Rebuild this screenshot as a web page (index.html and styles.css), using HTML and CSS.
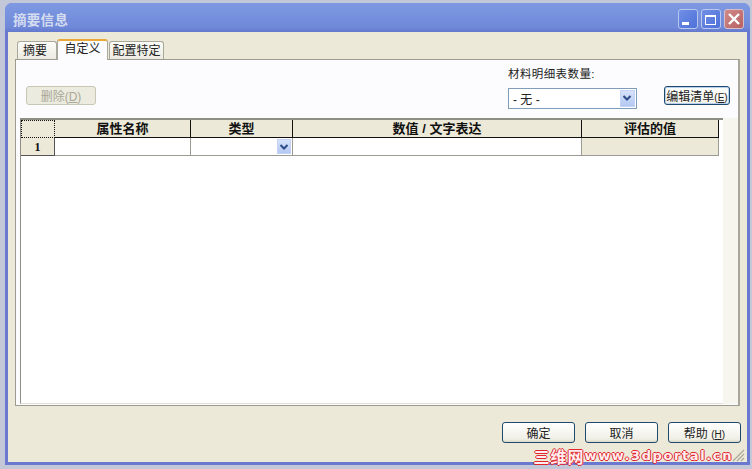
FILE: index.html
```html
<!DOCTYPE html>
<html lang="zh">
<head>
<meta charset="utf-8">
<title>摘要信息</title>
<link rel="stylesheet" href="styles.css">
</head>
<body>
<div class="window">
  <div class="titlebar">
    <span class="title">摘要信息</span>
    <div class="winbtns">
      <span class="winbtn"><svg width="18" height="18" viewBox="0 0 18 18"><rect x="3" y="12" width="7" height="3" fill="#fff"/></svg></span>
      <span class="winbtn"><svg width="18" height="18" viewBox="0 0 18 18"><rect x="3.5" y="5.5" width="10" height="9" fill="none" stroke="#fff"/><rect x="3" y="5" width="11" height="2" fill="#fff"/></svg></span>
      <span class="winbtn close"><svg width="18" height="18" viewBox="0 0 18 18"><path d="M4 4l10 10M14 4L4 14" stroke="#fff" stroke-width="2.4" fill="none"/></svg></span>
    </div>
  </div>
  <div class="client">
    <div class="tabs">
      <span class="tab first">摘要</span>
      <span class="tab active">自定义</span>
      <span class="tab third">配置特定</span>
    </div>
    <div class="panel">
      <div class="tools">
        <button class="btn-del">删除(<u>D</u>)</button>
        <div class="bom">
          <div class="bom-label">材料明细表数量:</div>
          <div class="combo"><span class="combo-val">- 无 -</span>
            <span class="arrow"><svg width="15" height="17" viewBox="0 0 15 17"><path d="M3.5 6l3.5 3.5L10.500 6" fill="none" stroke="#2b4a86" stroke-width="2"/></svg></span>
          </div>
        </div>
        <button class="btn-edit">编辑清单<span class="mn">(<u>E</u>)</span></button>
      </div>
      <div class="sheet-row">
        <div class="sheet">
          <div class="grid">
            <div class="head corner"></div>
            <div class="head">属性名称</div>
            <div class="head">类型</div>
            <div class="head">数值 / 文字表达</div>
            <div class="head last">评估的值</div>
            <div class="rownum">1</div>
            <div class="cell"></div>
            <div class="cell typecell"><span class="arrow small"><svg width="13" height="14" viewBox="0 0 13 14"><path d="M2.500 5l3.500 3.500L9.500 5" fill="none" stroke="#2b4a86" stroke-width="2"/></svg></span></div>
            <div class="cell"></div>
            <div class="cell calc"></div>
          </div>
        </div>
        <div class="sheet-rest"></div>
      </div>
    </div>
    <div class="footer">
      <button class="btn">确定</button>
      <button class="btn">取消</button>
      <button class="btn">帮助 <span class="mn">(<u>H</u>)</span></button>
    </div>
  </div>
  <svg class="grip" width="13" height="13" viewBox="0 0 13 13"><path d="M12 1L1 12M12 5L5 12M12 9L9 12" stroke="#a9a797" stroke-width="1.200" fill="none"/></svg>
  <div class="watermark"><span class="wm-cjk">三维网</span>www.3dportal.cn</div>
</div>
</body>
</html>
```
FILE: styles.css
```css
* { box-sizing: border-box; }
html, body { margin: 0; padding: 0; }
body {
  width: 752px; height: 469px; overflow: hidden;
  background: #c3c8d8;
  font-family: "Liberation Sans", "Noto Sans CJK SC", sans-serif;
  font-size: 12px; color: #222;
  padding: 3px 2px 4px 5px;
}
.window {
  position: relative;
  height: 462px;
  display: flex; flex-direction: column;
  background: #6a78d0;
  border-radius: 7px 7px 0 0;
  padding: 0 3px 3px 3px;
}
.titlebar {
  height: 29px; flex: none;
  margin: 0 -3px;
  padding: 2px 6px 0 8px;
  display: flex; align-items: center; justify-content: space-between;
  background: linear-gradient(#7f9ae2 0%, #7792de 40%, #6f88d8 85%, #6478cc 100%);
  border-radius: 7px 7px 0 0;
}
.title { color: #d4dcf0; font-weight: bold; font-size: 13.5px; letter-spacing: 0.3px; }
.winbtns { display: flex; gap: 3px; }
.winbtn {
  width: 20px; height: 20px; border-radius: 3px;
  background: linear-gradient(135deg, #6f8fe6, #4f70d8);
  border: 1px solid #b9c8ee;
  display: flex; align-items: center; justify-content: center;
  overflow: hidden;
}
.winbtn svg { flex: none; }
.close { background: linear-gradient(135deg, #d08a8a, #b86060); border-color: #d8c0c8; }
.client {
  flex: 1; min-height: 0;
  background: #ece9d8;
  padding: 10px 7px 0 7px;
  display: flex; flex-direction: column;
}
.tabs { display: flex; height: 18px; padding-left: 2px; align-items: flex-end; flex: none; position: relative; z-index: 1; margin-bottom: -1px; }
.tab {
  height: 18px; margin-bottom: 1px; line-height: 18px;
  border: 1px solid #a9a89c; border-bottom: none;
  border-radius: 3px 3px 0 0;
  background: linear-gradient(#fcfcf8, #ecebe2);
  font-size: 12px; color: #222; text-align: center;
}
.first { width: 40px; padding-right: 4px; }
.third { width: 55px; margin-left: 1px; }
.tab.active {
  height: 21px; width: 51px; margin-bottom: 0; padding: 0; line-height: 16px;
  background: #fcfcfe;
  border-top: 2px solid #e8a83c;
  border-bottom: none;
}
.panel {
  height: 347px; flex: none;
  background: #fcfcfe;
  border: 1px solid #9c9b91;
  border-right: 2px solid #a8a69a;
  padding: 0 0 1px 4px;
  display: flex; flex-direction: column;
}
.tools { height: 58px; flex: none; display: flex; align-items: flex-start; }
.btn-del {
  margin: 26px 0 0 6px; width: 70px; height: 19px; padding: 0;
  border: 1px solid #c8c6b4; border-radius: 3px;
  background: #ecebdf; color: #a9a797;
  font: 12px "Liberation Sans", "Noto Sans CJK SC", sans-serif;
}
.bom { margin-left: 412px; margin-top: 6px; width: 135px; }
.bom-label { height: 22px; line-height: 16px; font-size: 11.5px; letter-spacing: 0.4px; }
.combo {
  width: 129px; height: 21px;
  border: 1px solid #7f9db9;
  background: #fff; display: flex; align-items: center; justify-content: space-between;
  padding: 1px;
}
.combo-val { padding-left: 3px; font-size: 12px; }
.arrow {
  width: 15px; height: 17px; display: flex; align-items: center; justify-content: center;
  background: linear-gradient(#d6e2fb, #b4c8f2);
  border: 1px solid #c4d3f5;
  overflow: hidden;
}
.arrow svg { flex: none; }
.btn-edit {
  margin: 26px 0 0 21px; width: 66px; height: 19px; padding: 0;
  border: 1px solid #1f4a6e; border-radius: 3px;
  background: linear-gradient(#fff, #f2f1e8);
  box-shadow: inset 0 0 0 1px #b8d0ee;
  color: #222; white-space: nowrap;
  font: 12px "Liberation Sans", "Noto Sans CJK SC", sans-serif;
}
.mn { font-size: 10px; }
.sheet-row { flex: 1; min-height: 0; display: flex; }
.sheet {
  flex: none; width: 703px;
  background: #fff;
  border-top: 2px solid #8f8e85;
  border-left: 1px solid #8f8e85;
  border-bottom: 1px solid #e4e2d6;
}
.sheet-rest { flex: 1; background: #f6f5ee; }
.grid {
  display: grid;
  grid-template-columns: 34px 136px 102px 289px 137px;
  grid-template-rows: 18px 18px;
}
.head {
  background: #ece9d8;
  border-right: 1px solid #111;
  border-bottom: 1px solid #111;
  text-align: center; font-weight: bold; font-size: 13px; line-height: 17px;
  color: #111;
}
.head.corner { border: 1px dotted #111; }
.rownum {
  background: #ece9d8;
  border-right: 1px solid #555;
  border-bottom: 1px solid #555;
  text-align: center; font: bold 12px/18px "Liberation Serif", serif; color: #111;
}
.cell {
  border-right: 1px solid #9c9b91;
  border-bottom: 1px solid #9c9b91;
  background: #fff;
}
.typecell { display: flex; justify-content: flex-end; align-items: center; padding-right: 1px; }
.arrow.small { width: 14px; height: 15px; }
.calc { background: #ece9d8; }
.footer {
  flex: 1;
  display: flex; justify-content: flex-end; align-items: flex-start;
  gap: 10px; padding-top: 16px; margin-right: -1px;
}
.btn {
  width: 73px; height: 21px; padding: 0;
  border: 1px solid #1f4a6e; border-radius: 3px;
  background: linear-gradient(#fff, #f0efe6 85%, #dcd8c8);
  color: #222;
  font: 12px "Liberation Sans", "Noto Sans CJK SC", sans-serif;
}
.grip { position: absolute; right: 5px; bottom: 3px; }
.watermark {
  position: absolute; right: 17px; bottom: 1px;
  display: flex; align-items: center; height: 16px;
  color: #ffeef0; font: bold 13px/16px "DejaVu Sans", sans-serif;
  letter-spacing: 1.6px;
  text-shadow: 1px 0 #e0252e, -1px 0 #e0252e, 0 1px #e0252e, 0 -1px #e0252e;
}
.wm-cjk { font: bold 16px/16px "Noto Sans CJK SC", sans-serif; letter-spacing: 1px; }
```
